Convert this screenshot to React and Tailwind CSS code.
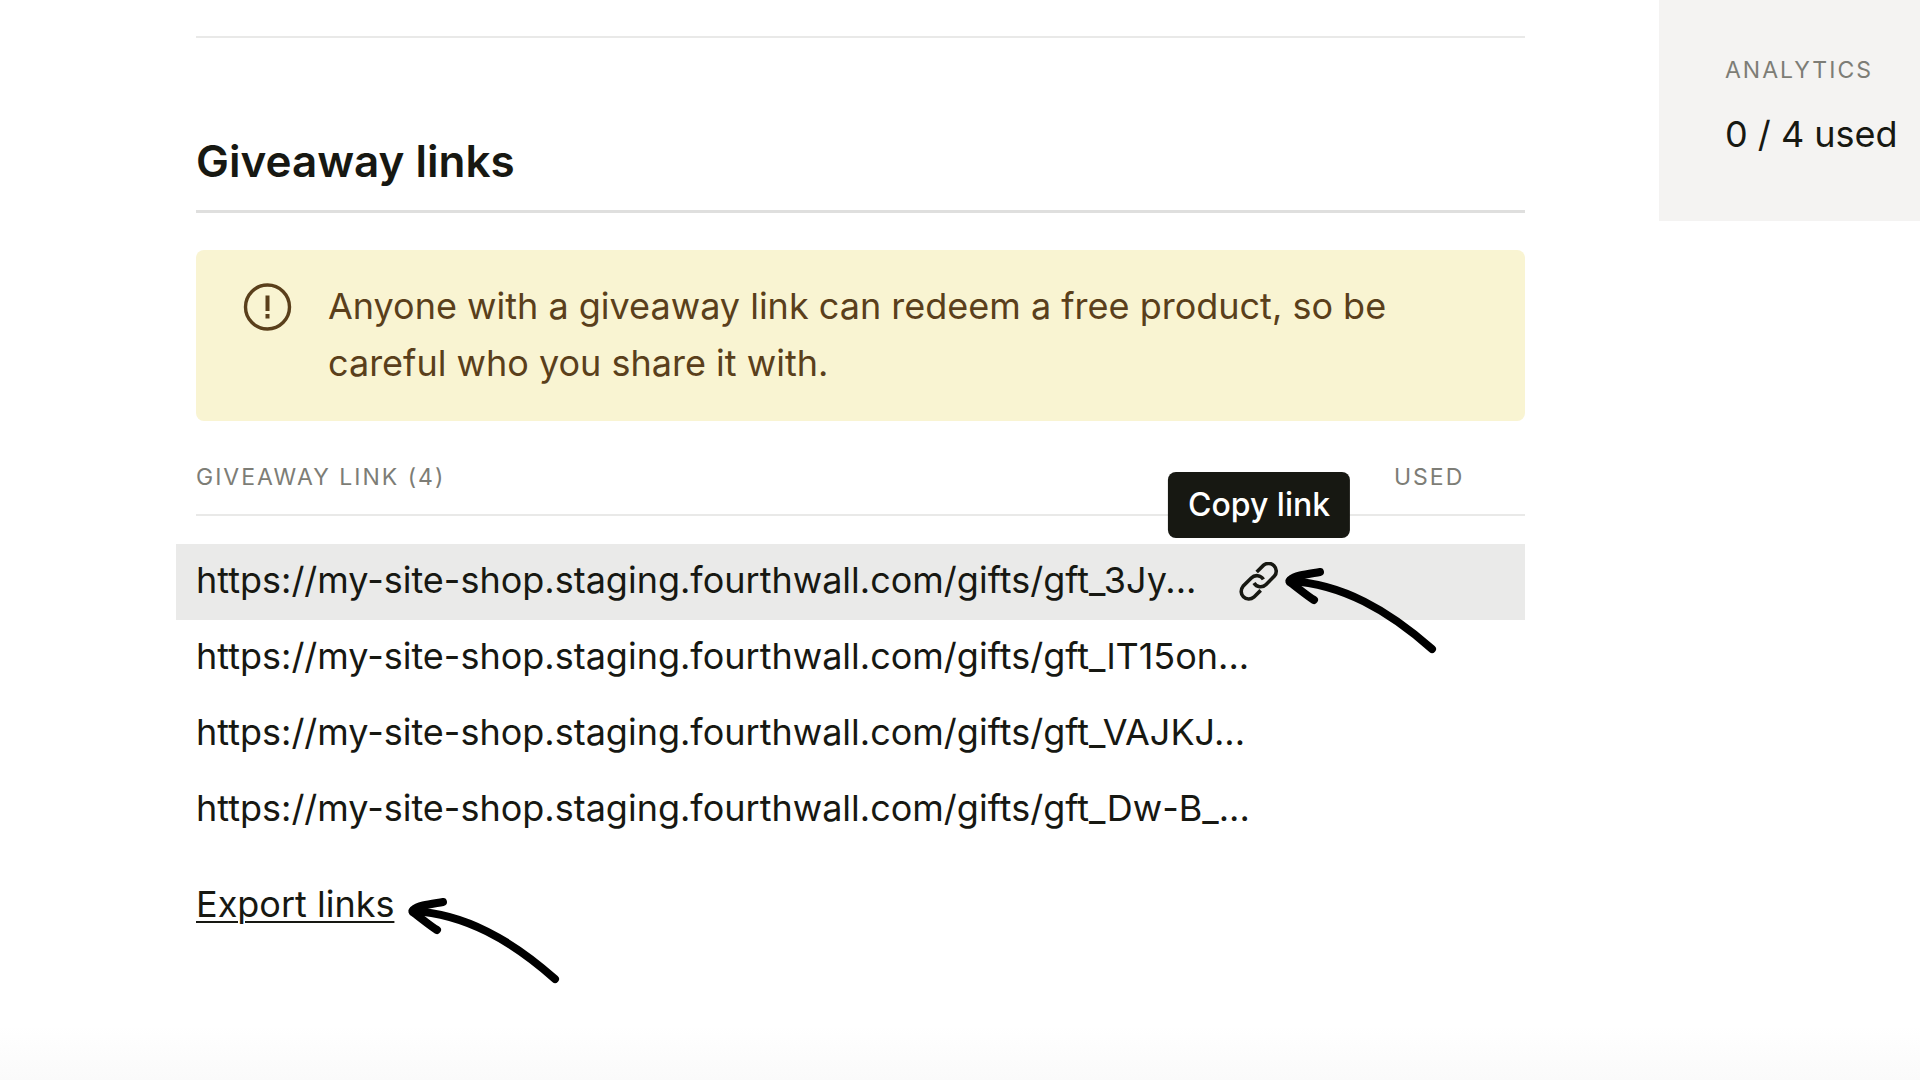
import React from 'react';

const links = [
  { id: 1, url: 'https://my-site-shop.staging.fourthwall.com/gifts/gft_3Jy...', active: true },
  { id: 2, url: 'https://my-site-shop.staging.fourthwall.com/gifts/gft_lT15on...' },
  { id: 3, url: 'https://my-site-shop.staging.fourthwall.com/gifts/gft_VAJKJ...' },
  { id: 4, url: 'https://my-site-shop.staging.fourthwall.com/gifts/gft_Dw-B_...' },
];

const Arrow = () => (
  <svg className="w-[156px] h-[88px]" viewBox="0 0 156 88" fill="none" stroke="#000" strokeWidth="8" strokeLinecap="round" strokeLinejoin="round" aria-hidden="true">
    <path d="M37 6C25 8 13 9 7 14C6 15 6 16 8 17C15 22 23 29 31 34" />
    <path d="M7 15C59 18 105 44 149 83" />
  </svg>
);

const LinkIcon = () => (
  <svg className="size-10" viewBox="0 0 40 40" fill="none" stroke="currentColor" strokeWidth="3.6" aria-hidden="true">
    <path d="M17.7 10L24.6 3.2A7.7 7.7 0 0 1 35.4 14.1L27.1 22.4A7.7 7.7 0 0 1 15 21" />
    <path d="M21.7 28.4L14.8 35.2A7.7 7.7 0 0 1 4 24.3L12.3 16A7.7 7.7 0 0 1 24.4 17.4" />
  </svg>
);

const AlertIcon = () => (
  <svg className="mt-1 size-12 shrink-0 overflow-visible" viewBox="0 0 48 48" fill="none" stroke="currentColor" strokeWidth="3.4" aria-hidden="true">
    <circle cx="23.5" cy="25" r="22" />
    <path strokeWidth="4" d="M23.5 13.5V29M23.5 32V36.5" />
  </svg>
);

const App = () => {
  return (
    <div className="flex min-h-screen items-start bg-linear-to-b from-white from-95% to-[#fafafa] font-['Inter','Liberation_Sans',sans-serif] text-[#171812]">
      <main className="flex-1 pl-[196px] pr-[134px] pt-9">
        <hr className="border-t-2 border-[#e9e9e8]" />

        <section>
          <h1 className="mt-[95px] pb-[21px] border-b-3 border-[#dfdfde] text-[44px] leading-[56px] font-semibold">Giveaway links</h1>

          <div className="mt-[37px] flex gap-9 rounded-lg bg-[#f9f4d2] px-12 pt-7 pb-[29px] text-4xl leading-[57px] text-[#5a3f1b]">
            <AlertIcon />
            <p>Anyone with a giveaway link can redeem a free product, so be careful who you share it with.</p>
          </div>

          <table className="mt-9 w-full table-fixed border-collapse text-left">
            <thead className="text-[23px] leading-8 tracking-[2px] text-[#7d7d76]">
              <tr className="border-b-2 border-[#e9e9e8]">
                <th className="pt-1 pb-[21px] font-normal">GIVEAWAY LINK (4)</th>
                <th className="w-[131px] pt-1 pb-[21px] font-normal">USED</th>
              </tr>
            </thead>
            <tbody className="text-4xl before:block before:h-7 before:content-['']">
              {links.map((link) => (
                <tr key={link.id} className={link.active ? 'bg-[#eaeae9]' : ''}>
                  <td className={link.active ? 'bg-[#eaeae9] p-0 shadow-[-20px_0_0_#eaeae9]' : 'p-0'}>
                    <div className="flex h-[76px] items-center justify-between pr-[115px]">
                      <span className="pb-1 whitespace-nowrap">{link.url}</span>
                      {link.active && (
                        <div className="relative flex">
                          <button type="button" aria-label="Copy link" aria-describedby="copy-tip"><LinkIcon /></button>
                          <div id="copy-tip" role="tooltip" className="absolute bottom-16 left-1/2 -translate-x-1/2 rounded-lg bg-[#171812] px-5 py-3 text-[32px] leading-[42px] font-medium whitespace-nowrap text-white">Copy link</div>
                          <div className="absolute top-1 left-11"><Arrow /></div>
                        </div>
                      )}
                    </div>
                  </td>
                  <td className="p-0"></td>
                </tr>
              ))}
            </tbody>
          </table>

          <div className="mt-7 flex items-start text-4xl leading-[57px]">
            <a href="#export" className="underline decoration-2 underline-offset-4">Export links</a>
            <div className="relative"><div className="absolute top-5 left-3"><Arrow /></div></div>
          </div>
        </section>
      </main>

      <aside className="w-[261px] bg-[#f4f3f2] pt-[54px] pb-[58px] pl-[66px] whitespace-nowrap">
        <h2 className="text-[23px] leading-8 tracking-[2px] text-[#7d7d76]">ANALYTICS</h2>
        <p className="mt-5 text-4xl leading-[57px]">0 / 4 used</p>
      </aside>
    </div>
  );
};

export default App;
